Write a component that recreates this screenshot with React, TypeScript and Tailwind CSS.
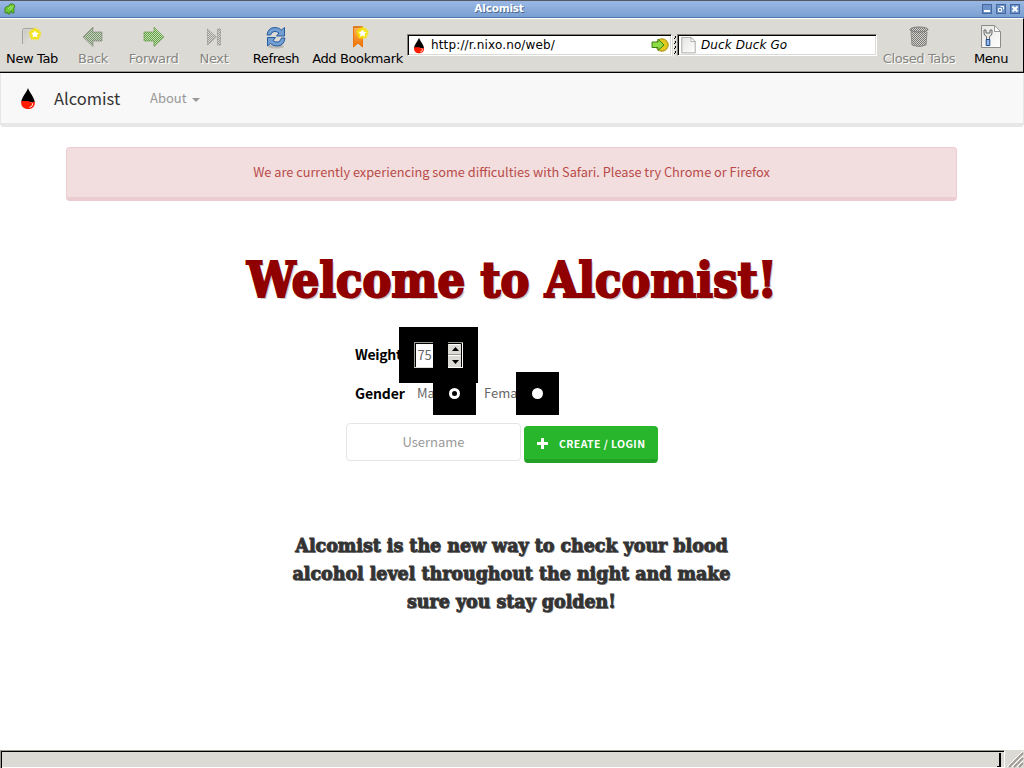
import type { ReactNode } from "react";

const ui = "font-['DejaVu_Sans',sans-serif]";
const body = "font-['Noto_Sans_CJK_SC',sans-serif]";
const slab = "font-['DejaVu_Serif_Condensed','DejaVu_Serif',serif] [font-stretch:condensed]";

function Drop({ className }: { className: string }) {
  return (
    <svg viewBox="0 0 16 24" className={className}>
      <path d="M8 1 C7 5 1 11 1 16 L15 16 C15 11 9 5 8 1Z" fill="#000" />
      <path d="M1 14.5 L9 14.5 L11 16.5 L15 15 C16 20 12 23 8 23 C4 23 0 20 1 14.5Z" fill="#fe1b00" />
      <path d="M13 17 Q13 20.5 9.5 21.3" fill="none" stroke="#fff" strokeWidth="1" />
    </svg>
  );
}

function Tool({ label, width, disabled = false, children }: { label: string; width: string; disabled?: boolean; children: ReactNode }) {
  return (
    <div className={`${width} flex shrink-0 flex-col items-center pt-[6px]`}>
      <svg viewBox="0 0 24 24" className="h-6 w-6 shrink-0">{children}</svg>
      <span className={`mt-px text-[13px] leading-[18px] tracking-[-0.38px] whitespace-nowrap ${disabled ? "text-[#858580] [text-shadow:1px_1px_0_#fff]" : "text-black"}`}>{label}</span>
    </div>
  );
}

function Star({ x, y }: { x: number; y: number }) {
  return (
    <g transform={`translate(${x} ${y})`}>
      <circle r="7" fill="url(#glow)" />
      <path d="M0-5 L1.7-2 L5-1.4 L2.8 1.2 L3.2 4.6 L0 3.3 L-3.2 4.6 L-2.8 1.2 L-5-1.4 L-1.7-2Z" fill="#fff" stroke="#f5e211" strokeWidth="1.3" />
    </g>
  );
}

function Page({ tool = false }: { tool?: boolean }) {
  return (
    <>
      <path d="M2.5 .5 H15.5 L21.5 6.5 V22.5 H2.5Z" fill="url(#paper)" stroke="#8c8c88" />
      <path d="M15.5 .5 V6.5 H21.5Z" fill="#fff" stroke="#999" />
      {tool && (
        <>
          <path d="M5 5 V8 Q5 10.5 7.5 11.5 V15 H10.5 V11.5 Q13 10.5 13 8 V5 L11 5 V8 H7 V5Z" fill="#e8e8e4" stroke="#666" />
          <path d="M7.2 14.5 H10.8 V20.5 H7.2Z" fill="#91b8e8" stroke="#204a87" />
        </>
      )}
    </>
  );
}

function Toolbar() {
  return (
    <div className={`${ui} flex h-[55px] shrink-0 border-t border-r border-b border-t-white border-r-black border-b-black bg-[#dcdad5] shadow-[inset_0_-1px_0_#9e9a91]`}>
      <Tool label="New Tab" width="w-16">
        <path d="M2.5 19 V5.5 Q2.5 3.5 4.5 3.5 H14" fill="none" stroke="#a3a39c" />
        <path d="M3.5 19 V4.5 H14 V10Z" fill="url(#tab)" />
        <Star x={15} y={9} />
      </Tool>
      <Tool label="Back" width="w-[58px]" disabled>
        <path d="M2 12 L12 2 V7 H21 V16 H12 V21.5Z" fill="url(#backDots)" stroke="#85857f" strokeDasharray="1 .5" />
      </Tool>
      <Tool label="Forward" width="w-[63px]" disabled>
        <path d="M22 12 L12 2 V7 H2 V16 H12 V21.5Z" fill="url(#greenDots)" stroke="#659b4a" strokeDasharray="1 .5" />
      </Tool>
      <Tool label="Next" width="w-[58px]" disabled>
        <path d="M5.5 4 L14.5 12 L5.5 20Z M15.5 4 H18.5 V20 H15.5Z" fill="url(#nextDots)" stroke="#999994" strokeDasharray="1 .5" />
      </Tool>
      <Tool label="Refresh" width="w-[66px]">
        <ellipse cx="12" cy="21.5" rx="8" ry="2" fill="#b9b8b4" />
        <path d="M3 10 Q4 2.5 11 2.5 Q15 2.5 17.5 5 L20.5 2.5 V11 H12.5 L15 8 Q12.5 6 10 6.5 Q7.5 7 6.5 10Z" fill="#729fcf" stroke="#285ba0" />
        <path d="M21 13 Q20 21 13 21 Q9 21 6.5 18.5 L3.5 21 V12.5 H11.5 L9 15.5 Q11 17.5 14 17 Q16.5 16.5 17.5 13Z" fill="#729fcf" stroke="#285ba0" />
      </Tool>
      <Tool label="Add Bookmark" width="w-[97px]">
        <path d="M7.5 2 H16.5 V22 L12 18 L7.5 22Z" fill="url(#orange)" stroke="#e9760c" />
        <path d="M7 2 H17" stroke="#ce5c00" />
        <Star x={16.5} y={8} />
      </Tool>
      <div className="mt-[15px] ml-px flex h-[22px] w-[265px] shrink-0 items-center border border-t-[#85827a] border-r-white border-b-white border-l-[#85827a] bg-white pr-[2px] pl-[3px] shadow-[inset_1px_1px_0_#000,inset_-1px_-1px_0_#dcdad5]">
        <Drop className="h-[17px] w-4" />
        <span className="ml-1 text-[12px] tracking-[0.15px] text-black">http://r.nixo.no/web/</span>
        <svg viewBox="0 0 18 16" className="ml-auto h-4 w-[18px]">
          <circle cx="11" cy="8" r="6.2" fill="#e3c91f" stroke="#a38909" />
          <path d="M1 5 H7 V2 L13 8 L7 13.5 V10.5 H1Z" fill="#8fdb45" stroke="#3c8211" />
        </svg>
      </div>
      <svg viewBox="0 0 5 24" className="mt-[15px] h-6 w-[5px] shrink-0">
        <path d="M1.5 2V23" stroke="#f4f3f0" />
        <g fill="#000">
          <rect x="3" y="2" width="1" height="2" /><rect x="2" y="4" width="1" height="1" />
          <rect x="3" y="7" width="1" height="2" /><rect x="2" y="9" width="1" height="1" />
          <rect x="3" y="12" width="1" height="2" /><rect x="2" y="14" width="1" height="1" />
          <rect x="3" y="17" width="1" height="2" /><rect x="2" y="19" width="1" height="1" />
        </g>
      </svg>
      <div className="mt-[15px] flex h-[22px] w-[200px] shrink-0 items-center border border-t-[#85827a] border-r-white border-b-white border-l-[#85827a] bg-white pl-[2px] shadow-[inset_1px_1px_0_#000,inset_-1px_-1px_0_#dcdad5]">
        <svg viewBox="0 0 24 24" className="h-[17px] w-[17px]"><Page /></svg>
        <span className="ml-1 text-[12px] tracking-[0.1px] text-black italic">Duck Duck Go</span>
      </div>
      <Tool label="Closed Tabs" width="w-[84px]" disabled>
        <path d="M3 4 Q12 0 21 4 V6 H20 L19 20 Q12 24 5 20 L4 6 H3Z" fill="url(#grayDots)" />
        <ellipse cx="12" cy="4.5" rx="9" ry="2.5" fill="none" stroke="#7c7c79" />
        <path d="M4 7 L5 20 Q12 23 19 20 L20 7" fill="none" stroke="#8c8c88" />
      </Tool>
      <Tool label="Menu" width="w-[60px]"><Page tool /></Tool>
    </div>
  );
}

function WindowButton({ children }: { children: ReactNode }) {
  return (
    <svg viewBox="0 0 10 10" className="h-[10px] w-[10px] bg-[#6c92c9] shadow-[inset_0_0_0_1px_#44689b]">{children}</svg>
  );
}

function Definitions() {
  return (
    <svg className="absolute h-0 w-0">
      <defs>
        <radialGradient id="glow"><stop offset=".5" stopColor="#f7e500" /><stop offset="1" stopColor="#f7e500" stopOpacity="0" /></radialGradient>
        <linearGradient id="tab" x2="1" y2="1"><stop stopColor="#c9c8c3" /><stop offset=".6" stopColor="#dcdad5" /></linearGradient>
        <linearGradient id="paper" x2="1" y2="1"><stop stopColor="#e4e4e2" /><stop offset="1" stopColor="#fff" /></linearGradient>
        <linearGradient id="orange" x2="0" y2="1"><stop stopColor="#fcb45c" /><stop offset="1" stopColor="#ef7205" /></linearGradient>
        <pattern id="greenDots" width="2" height="2" patternUnits="userSpaceOnUse"><rect width="2" height="2" fill="#c6dcb4" /><rect width="1" height="1" fill="#62a544" /><rect x="1" y="1" width="1" height="1" fill="#62a544" /></pattern>
        <pattern id="backDots" width="2" height="2" patternUnits="userSpaceOnUse"><rect width="2" height="2" fill="#cbd0c3" /><rect width="1" height="1" fill="#74976a" /><rect x="1" y="1" width="1" height="1" fill="#74976a" /></pattern>
        <pattern id="nextDots" width="2" height="2" patternUnits="userSpaceOnUse"><rect width="2" height="2" fill="#dcdad5" /><rect width="1" height="1" fill="#999994" /><rect x="1" y="1" width="1" height="1" fill="#999994" /></pattern>
        <pattern id="grayDots" width="2" height="2" patternUnits="userSpaceOnUse"><rect width="2" height="2" fill="#d4d3cf" /><rect width="1" height="1" fill="#777775" /><rect x="1" y="1" width="1" height="1" fill="#777775" /></pattern>
      </defs>
    </svg>
  );
}

function Radio({ checked = false, className }: { checked?: boolean; className: string }) {
  return (
    <span className={`absolute -top-[3px] flex h-[43px] w-[43px] items-center justify-center bg-black ${className}`}>
      <span className="flex h-[11px] w-[11px] items-center justify-center rounded-full bg-white">
        {checked && <span className="h-[5px] w-[5px] rounded-full bg-black" />}
      </span>
    </span>
  );
}

export default function App() {
  return (
    <div className="flex h-screen w-full flex-col overflow-hidden bg-white">
      <Definitions />
      <header className={`${ui} flex h-[18px] shrink-0 items-center border-t border-b border-t-[#555861] border-b-[#4e77b0] bg-linear-to-b from-[#9ab8e4] to-[#7b9fd2] pr-[4px] pl-[4px]`}>
        <svg viewBox="0 0 12 12" className="h-3 w-3">
          <path d="M1 5 Q2 3 5 3 L6 1 Q10 0 11 3 L10 5 L10 10 H8 L7.5 8 L6 9 V11 H4 L3.5 9 L2.5 10 H1Z" fill="#6bc832" stroke="#37771c" strokeWidth=".8" />
          <path d="M4 6 L7 3 M6 7 L9 3" stroke="#b9f58e" strokeWidth=".8" />
        </svg>
        <span className="flex-1 pb-px text-center text-[10.5px] leading-none font-bold tracking-[-0.2px] text-white [text-shadow:1px_1px_0_#4a6892]">Alcomist</span>
        <div className="flex gap-[4px]">
          <WindowButton><path d="M2 7 H8" stroke="#fff" strokeWidth="2" /></WindowButton>
          <WindowButton><path d="M4.5 2.5 H7.5 V5.5 M2.5 4.5 H5.5 V7.5 H2.5Z" fill="none" stroke="#fff" /></WindowButton>
          <WindowButton><path d="M2.5 2.5 L7.5 7.5 M7.5 2.5 L2.5 7.5" stroke="#fff" strokeWidth="2" /></WindowButton>
        </div>
      </header>
      <Toolbar />

      <div className={`${body} flex flex-1 flex-col`}>
        <nav className="flex h-[54px] shrink-0 items-center rounded-b border-r border-b-4 border-l border-[#e7e7e7] bg-[#f8f8f8] pt-px pl-[19px]">
          <Drop className="h-[23px] w-4" />
          <span className="ml-[18px] w-[66px] text-[16.5px] text-[#333]">Alcomist</span>
          <span className="-mt-px ml-[30px] text-[13px] text-[#999]">About</span>
          <svg viewBox="0 0 8 4" className="mt-[2px] ml-[5px] h-1 w-2"><path d="M0 0H8L4 4Z" fill="#999" /></svg>
        </nav>
        <div className="mt-5 ml-[66px] flex h-[54px] w-[891px] shrink-0 items-center justify-center rounded border border-b-4 border-[#ebccd1] bg-[#f2dede] pb-px text-[12.75px] text-[#b94a48]">
          <span>We are currently experiencing some difficulties with Safari. Please try Chrome or Firefox</span>
        </div>
        <h1 className={`${slab} mt-[49px] h-[61px] text-center text-[48px] leading-[60px] font-bold tracking-[0.2px] whitespace-nowrap text-[#900000] [-webkit-text-stroke:2.2px_#900000] [text-shadow:2px_2px_0_#ccc]`}>Welcome to Alcomist!</h1>

        <form className="ml-[346px] flex w-[320px] flex-col pt-[16px] text-[13px] text-[#666]">
          <div className="relative h-12 pl-[9px] text-[14px] leading-[55px] font-bold tracking-[-0.3px] text-black">
            Weight
            <div className="absolute top-0 left-[53px] flex h-14 w-[79px] items-center justify-center bg-black pr-px">
              <div className="flex h-[26px] w-[49px] bg-black">
                <span className="w-[19px] overflow-hidden border-t border-b border-l border-t-[#9e9a91] border-b-[#dcdad5] border-l-[#9e9a91] bg-white pl-[3px] text-[13px] leading-6 font-normal text-[#666] shadow-[inset_1px_1px_0_#000]">75</span>
                <svg viewBox="0 0 15 26" className="ml-auto h-[26px] w-[15px]">
                  <path d="M0 0H15V26H0Z" fill="#dcdad5" />
                  <path d="M0 25.5H14.5V.5M0 13.5H13M1 2.5H12" fill="none" stroke="#fff" />
                  <path d="M0 .5H15M0 12.5H13" stroke="#9e9a91" />
                  <path d="M0 1.5H13.5V25" fill="none" stroke="#000" />
                  <path d="M4 9L7.5 5L11 9ZM4 18L7.5 22L11 18Z" fill="#000" />
                </svg>
              </div>
            </div>
          </div>
          <div className="relative flex h-12 pl-[9px] leading-[36px]">
            <span className="w-[62px] text-[14px] font-bold tracking-[-0.1px] text-black">Gender</span>
            <span className="w-[67px]">Male</span>
            <span>Female</span>
            <Radio checked className="left-[87px]" />
            <Radio className="left-[170px]" />
          </div>
          <div className="flex items-start gap-[3px]">
            <input type="text" placeholder="Username" className="h-[38px] w-[175px] rounded border border-[#e5e5e5] bg-white pb-[2px] text-center text-[13px] outline-none placeholder:text-[#999]" />
            <button type="button" className="mt-[3px] flex h-[37px] w-[134px] items-center rounded border border-b-4 border-[#28b62c] border-b-[#23a127] bg-[#28b62c] pl-[12px] text-[10.5px] font-bold tracking-[0.4px] whitespace-nowrap text-white">
              <svg viewBox="0 0 11 11" className="mr-[11px] h-[11px] w-[11px]"><path d="M4 0H7V4H11V7H7V11H4V7H0V4H4Z" fill="#fff" /></svg>
              <span className="pt-px">CREATE / LOGIN</span>
            </button>
          </div>
        </form>

        <p className={`${slab} mt-[69px] pr-px text-center text-[19.4px] leading-7 font-bold whitespace-nowrap text-[#333] [-webkit-text-stroke:0.9px_#333] [text-shadow:1px_1px_0_#aaa]`}>
          <span>Alcomist is the new way to check your blood</span><br />
          <span>alcohol level throughout the night and make</span><br />
          <span>sure you stay golden!</span>
        </p>
      </div>

      <footer className="flex h-[18px] shrink-0 bg-[#dcdad5]">
        <div className="flex w-[1005px] justify-end border-t border-r border-l border-[#9e9a91] border-r-white pr-[3px] shadow-[inset_1px_1px_0_#000,inset_0_-1px_0_#fff]">
          <div className="mt-[2px] h-[14px] w-[4px] border-r-2 border-b border-black" />
        </div>
        <svg viewBox="0 0 19 18" className="h-[18px] w-[19px]">
          <path d="M4 17L18 3M9 17L18 8M14 17L18 13" stroke="#9e9a91" strokeWidth="1.8" />
          <path d="M2 17L18 1M7 17L18 6M12 17L18 11" stroke="#fff" />
        </svg>
      </footer>
    </div>
  );
}
